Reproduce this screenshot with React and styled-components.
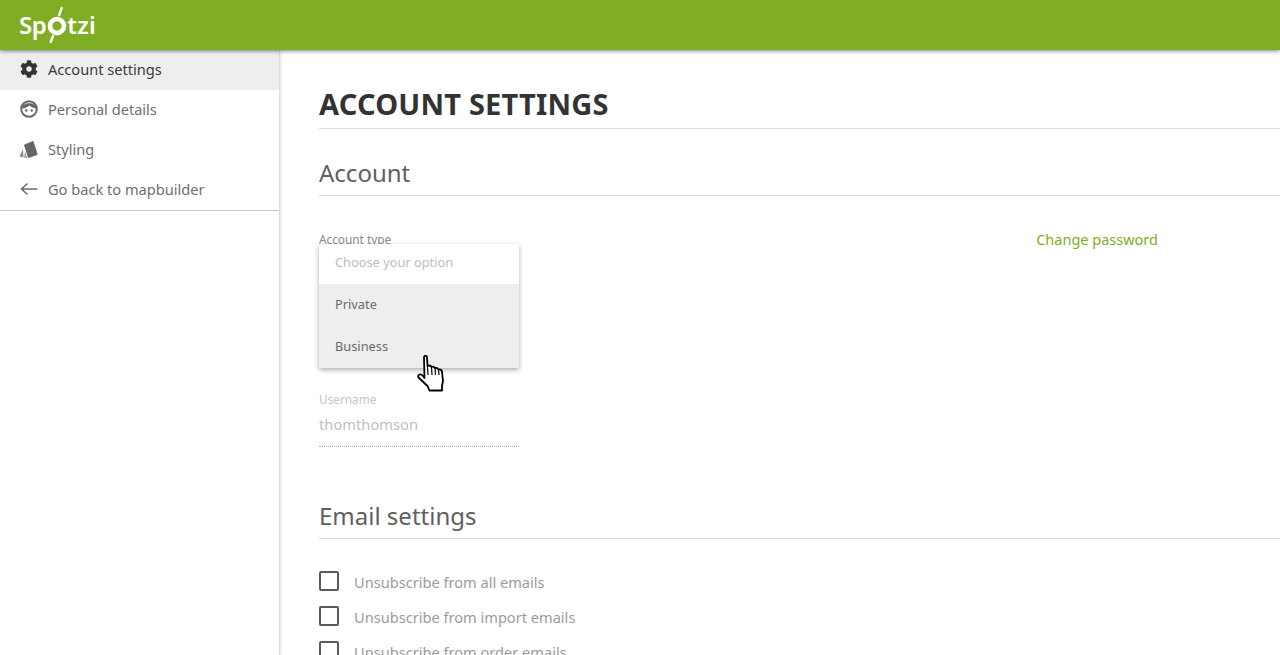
import styled, { createGlobalStyle } from "styled-components";
import { FaCog } from "react-icons/fa";

const GlobalStyle = createGlobalStyle`
  html, body {
    margin: 0;
    height: 100%;
    overflow: hidden;
    background: #fff;
    font-family: "Noto Sans", "Open Sans", sans-serif;
  }
`;

const Page = styled.div`
  width: 1280px;
  height: 655px;
  overflow: hidden;
  display: flex;
  flex-direction: column;
`;

const Header = styled.header`
  height: 50px;
  flex: none;
  background: #7fae24;
  box-shadow: 0 1px 4px rgba(0, 0, 0, 0.5);
  padding-left: 19px;
  display: flex;
  align-items: center;
  position: relative;
  z-index: 2;
`;

const Logo = styled.div`
  display: flex;
  align-items: center;
  color: #fff;
  font-size: 24px;
  font-weight: 600;
  letter-spacing: -0.5px;
  line-height: 1;
`;

const LogoRing = styled.svg`
  width: 24px;
  height: 36px;
  margin: 0 -2px 0 -1px;
  flex: none;
`;

const LogoTail = styled.span`
  letter-spacing: 0.2px;
`;

const Body = styled.div`
  flex: 1;
  display: flex;
  min-height: 0;
`;

const Sidebar = styled.aside`
  width: 279px;
  flex: none;
  border-right: 1px solid #dcdcdc;
  box-shadow: 1px 0 3px rgba(0, 0, 0, 0.12);
`;

const Nav = styled.nav`
  border-bottom: 1px solid #c8c8c8;
`;

const NavItem = styled.a`
  height: 40px;
  box-sizing: border-box;
  padding: 0 0 2px 19px;
  display: flex;
  align-items: center;
  gap: 10px;
  font-size: 14.6px;
  color: ${(p) => (p.$active ? "#3a3a3a" : "#6f6f6f")};
  background: ${(p) => (p.$active ? "#eeeeee" : "transparent")};
`;

const NavIcon = styled.span`
  width: 19px;
  height: 19px;
  flex: none;
  display: flex;
  align-items: center;
  justify-content: center;
  color: ${(p) => p.$color || "#666"};
`;

const Main = styled.main`
  flex: 1;
  padding: 32px 0 0 39px;
  min-width: 0;
`;

const Title = styled.h1`
  margin: 0;
  height: 46px;
  line-height: 44px;
  font-size: 29px;
  font-weight: 700;
  letter-spacing: 0.2px;
  color: #333;
  border-bottom: 1px solid #dedede;
`;

const SectionTitle = styled.h2`
  margin: ${(p) => p.$top || "0"} 0 0;
  height: 44px;
  line-height: 44px;
  font-size: 24px;
  font-weight: 400;
  color: #606060;
  border-bottom: 1px solid #dedede;
`;

const FieldRow = styled.div`
  display: flex;
  justify-content: space-between;
  height: 275px;
  padding-top: 35px;
  box-sizing: border-box;
`;

const FieldColumn = styled.div`
  width: 200px;
  display: flex;
  flex-direction: column;
`;

const FieldLabel = styled.label`
  display: block;
  font-size: 11.8px;
  line-height: 16px;
  color: ${(p) => (p.$disabled ? "#c4c4c4" : "#8a8a8a")};
`;

const Dropdown = styled.div`
  height: 124px;
  margin-top: -3px;
  position: relative;
  background: #fff;
  border-radius: 2px;
  box-shadow: 0 2px 5px rgba(0, 0, 0, 0.32);
  overflow: hidden;
`;

const Option = styled.div`
  height: ${(p) => (p.$first ? "40px" : "42px")};
  box-sizing: border-box;
  padding: 0 0 ${(p) => (p.$first ? "4px" : "2px")} 16px;
  display: flex;
  align-items: center;
  font-size: 12.8px;
  color: ${(p) => (p.$placeholder ? "#bdbdbd" : "#6f6a66")};
  background: ${(p) => (p.$placeholder ? "#fff" : "#eeeeee")};
`;

const UsernameField = styled.div`
  margin-top: 23px;
`;

const UsernameValue = styled.div`
  height: 40px;
  box-sizing: border-box;
  line-height: 34px;
  font-size: 14.7px;
  color: #bfbfbf;
  border-bottom: 1px dotted #aaa;
`;

const ChangePassword = styled.a`
  margin-right: 122px;
  font-size: 14.5px;
  line-height: 16px;
  color: #7fae24;
`;

const CheckList = styled.div`
  padding-top: 32px;
  display: flex;
  flex-direction: column;
  gap: 15px;
`;

const CheckRow = styled.div`
  display: flex;
  align-items: center;
  gap: 15px;
  height: 20px;
`;

const CheckBox = styled.span`
  width: 20px;
  height: 20px;
  flex: none;
  box-sizing: border-box;
  border: 2px solid #5a5a5a;
  border-radius: 2px;
`;

const CheckText = styled.span`
  margin-top: 2px;
  font-size: 14.6px;
  color: #9b9b9b;
`;

const HandCursor = styled.svg`
  position: absolute;
  left: 417px;
  top: 355px;
  z-index: 5;
`;

export default function App() {
  return (
    <Page>
      <GlobalStyle />
      <Header>
        <Logo>
          <span>Sp</span>
          <LogoRing viewBox="0 0 24 36">
            <circle cx="12" cy="19" r="7" fill="none" stroke="#fff" strokeWidth="4.600" />
            <path d="M16.700 0.800 L14.200 8 M8 29 L5.700 35" stroke="#fff" strokeWidth="2.400" strokeLinecap="round" />
          </LogoRing>
          <LogoTail>tzi</LogoTail>
        </Logo>
      </Header>
      <Body>
        <Sidebar>
          <Nav>
            <NavItem $active>
              <NavIcon $color="#333">
                <FaCog size={18} />
              </NavIcon>
              Account settings
            </NavItem>
            <NavItem>
              <NavIcon>
                <svg width="18" height="18" viewBox="0 0 18 18">
                  <circle cx="9" cy="9" r="7.800" fill="#fff" stroke="#666" strokeWidth="2" />
                  <path d="M1.500 8.500 C2.500 1.500 15.500 1.500 16.500 8.500 C13.500 8 11 7 9.500 5.500 C8 7 5 8.500 1.500 8.500Z" fill="#666" />
                  <circle cx="6.300" cy="10.500" r="1.200" fill="#666" />
                  <circle cx="11.700" cy="10.500" r="1.200" fill="#666" />
                </svg>
              </NavIcon>
              Personal details
            </NavItem>
            <NavItem>
              <NavIcon>
                <svg width="19" height="19" viewBox="0 0 19 19">
                  <path d="M0.500 16.500 L4 9 L4.500 17.500 Z" fill="#8a8a8a" />
                  <path d="M5 17.500 L6 11 L8.500 18.500 Z" fill="#a8a8a8" />
                  <path d="M5.500 5 L14 1.500 L18.200 14.500 L9.500 17.500 Z" fill="#666" stroke="#666" strokeLinejoin="round" />
                </svg>
              </NavIcon>
              Styling
            </NavItem>
            <NavItem>
              <NavIcon>
                <svg width="18" height="14" viewBox="0 0 18 14">
                  <path d="M1.500 7 H17.500 M7.500 1.500 L1.500 7 L7.500 12.500" fill="none" stroke="#66717c" strokeWidth="1.600" />
                </svg>
              </NavIcon>
              Go back to mapbuilder
            </NavItem>
          </Nav>
        </Sidebar>
        <Main>
          <Title>ACCOUNT SETTINGS</Title>
          <SectionTitle $top="22px">Account</SectionTitle>
          <FieldRow>
            <FieldColumn>
              <FieldLabel>Account type</FieldLabel>
              <Dropdown>
                <Option $placeholder $first>
                  Choose your option
                </Option>
                <Option>Private</Option>
                <Option>Business</Option>
              </Dropdown>
              <UsernameField>
                <FieldLabel $disabled>Username</FieldLabel>
                <UsernameValue>thomthomson</UsernameValue>
              </UsernameField>
            </FieldColumn>
            <ChangePassword>Change password</ChangePassword>
          </FieldRow>
          <SectionTitle $top="23px">Email settings</SectionTitle>
          <CheckList>
            <CheckRow>
              <CheckBox />
              <CheckText>Unsubscribe from all emails</CheckText>
            </CheckRow>
            <CheckRow>
              <CheckBox />
              <CheckText>Unsubscribe from import emails</CheckText>
            </CheckRow>
            <CheckRow>
              <CheckBox />
              <CheckText>Unsubscribe from order emails</CheckText>
            </CheckRow>
          </CheckList>
        </Main>
      </Body>
      <HandCursor width="28" height="37" viewBox="0 0 28 37">
        <path
          d="M7 2.500 Q7 0.800 8.500 0.800 Q10 0.800 10 2.500 L10.500 11 L12 10.500 Q14 10.500 14.500 12 Q16.500 11 18 13 Q20.500 12.500 21.500 14.500 Q24.500 14 25 17 L26 26 L25 31 L25 35.500 L12.500 35.500 L10.500 31 L1.500 22.500 Q0.500 20.500 2.500 19.500 Q4.500 19 6 21 L7.500 23 Z"
          fill="#fff"
          stroke="#000"
          strokeWidth="1.800"
          strokeLinejoin="round"
        />
        <path d="M10.500 11 L11 20 M14.500 12 L15 20 M18 13 L18.500 20 M21.500 14.500 L22 20" stroke="#000" strokeWidth="1.200" fill="none" />
      </HandCursor>
    </Page>
  );
}
